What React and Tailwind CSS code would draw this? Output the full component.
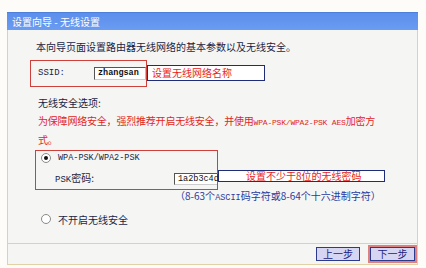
import React from 'react';

const cjk = "font-['Noto_Sans_CJK_SC',sans-serif]";
const mono = "font-['Liberation_Mono','Noto_Sans_CJK_SC',monospace]";

const Radio = ({ checked }) => (
  <div className="w-[10px] h-[10px] rounded-full border border-[#8a8a8a] bg-white flex items-center justify-center shrink-0">
    {checked && <div className="w-[4px] h-[4px] rounded-full bg-[#111]" />}
  </div>
);

const Note = ({ children, className }) => (
  <div className={`border border-[#1f2c78] bg-white text-[#e8261c] text-[10px] leading-none flex items-center ${className}`}>
    {children}
  </div>
);

export default function App() {
  return (
    <div className={`w-[426px] h-[268px] bg-[#fdfcf8] pt-[12px] pl-[7px] overflow-hidden ${cjk}`}>
      <div className="w-[411px] flex flex-col">
        <div className="h-[18px] bg-gradient-to-b from-[#5c8eec] to-[#6a9cf2] border-t border-[#4d80dc] text-white text-[10px] leading-[17px] pl-[5px]">
          设置向导 - 无线设置
        </div>

        <div className="h-[213px] border-x border-[#e3d1a6] bg-[#f5f5f3] flex flex-col text-[10px] text-[#1a1f45]">
          <div className="mt-[10px] ml-[28px] leading-[14px]">
            本向导页面设置路由器无线网络的基本参数以及无线安全。
          </div>

          <div className="mt-[6px] ml-[22px] flex items-start">
            <div className="w-[117px] h-[27px] border border-[#d0403a] flex items-center">
              <span className={`${mono} text-[9px] ml-[7px] w-[56px]`}>SSID:</span>
              <div className={`${mono} w-[52px] h-[13px] border border-[#555] border-r-[#bbb] border-b-[#ccc] bg-white text-[8.5px] font-bold leading-[11px] pl-[3px] text-[#111]`}>
                zhangsan
              </div>
            </div>
            <Note className="w-[118px] h-[16px] mt-[5px] pl-[4px]">设置无线网络名称</Note>
          </div>

          <div className="mt-[9px] ml-[30px] leading-[14px]">无线安全选项:</div>

          <div className="mt-[2px] ml-[30px] leading-[17px] text-[#e2261c] tracking-[-0.2px]">
            为保障网络安全，强烈推荐开启无线安全，并使用<span className={`${mono} text-[8px]`}>WPA-PSK/WPA2-PSK AES</span>加密方
            <br />
            式。
          </div>

          <div className="mt-[2px] ml-[27px] flex items-start">
            <div className="w-[183px] h-[40px] border border-[#d0403a] flex flex-col">
              <div className="mt-[1px] pl-[5px] h-[12px] flex items-center gap-[7px]">
                <Radio checked />
                <span className={`${mono} text-[8.5px]`}>WPA-PSK/WPA2-PSK</span>
              </div>
              <div className="mt-[6px] pl-[19px] flex items-center">
                <span className="w-[120px]">
                  <span className={`${mono} text-[9px]`}>PSK</span>密码:
                </span>
                <div className={`${mono} w-[43px] h-[12px] border border-[#555] border-r-0 border-b-[#ccc] bg-white text-[8.5px] leading-[10px] pl-[3px] text-[#111]`}>
                  1a2b3c4d
                </div>
              </div>
            </div>
            <Note className="w-[167px] h-[12px] mt-[20px] pl-[27px]">设置不少于8位的无线密码</Note>
          </div>

          <div className="ml-[167px] leading-[12px] text-[#2a3a9e]">
            （8-63个<span className={`${mono} text-[8.5px]`}>ASCII</span>码字符或8-64个十六进制字符）
          </div>

          <div className="mt-[9px] ml-[33px] h-[12px] flex items-center gap-[7px]">
            <Radio />
            <span>不开启无线安全</span>
          </div>
        </div>

        <div className="h-[22px] border border-[#e3d1a6] bg-[#f5f5f3] flex items-center justify-end gap-[10px] pr-[2px]">
          <button className="w-[44px] h-[14px] bg-[#d6d6f3] border border-[#2b3a8c] text-[#1a2280] text-[10px] leading-none flex items-center justify-center">
            上一步
          </button>
          <button className="w-[45px] h-[14px] bg-[#d6d6f3] border border-[#2b3a8c] text-[#1a2280] text-[10px] leading-none flex items-center justify-center shadow-[0_0_0_2px_#dc8080]">
            下一步
          </button>
        </div>
      </div>
    </div>
  );
}
